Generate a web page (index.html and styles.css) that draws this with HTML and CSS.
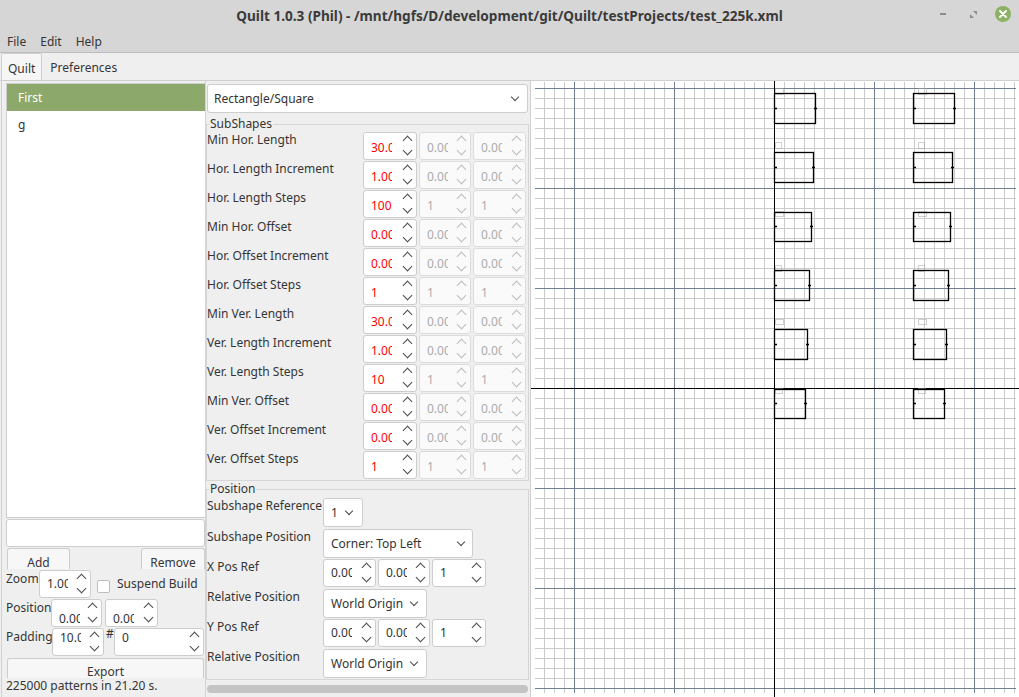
FILE: index.html
```html
<!DOCTYPE html>
<html>
<head>
<meta charset="utf-8">
<title>Quilt</title>
<link rel="stylesheet" href="styles.css">
</head>
<body>
<div class="window">
  <div class="titlebar">
    <div class="title">Quilt 1.0.3 (Phil) - /mnt/hgfs/D/development/git/Quilt/testProjects/test_225k.xml</div>
    <div class="wctl">
      <span class="wmin"></span>
      <svg class="wrestore" width="7" height="7" viewBox="0 0 7 7"><path d="M3 0H7V4Z M0 3V7H4Z" fill="#8c8c8c"/></svg>
      <span class="wclose"><svg width="8" height="8" viewBox="0 0 8 8"><path d="M1 1L7 7M7 1L1 7" stroke="#fff" stroke-width="1.8" stroke-linecap="round"/></svg></span>
    </div>
  </div>
  <div class="menubar"><span>File</span><span>Edit</span><span>Help</span></div>
  <div class="tabbar"><div class="tab active">Quilt</div><div class="tab">Preferences</div></div>
  <div class="pane">
    <div class="left">
      <div class="list">
        <div class="item sel">First</div>
        <div class="item">g</div>
      </div>
      <div class="lineedit"></div>
      <div class="btnrow"><div class="btn add">Add</div><div class="btn remove">Remove</div></div>
      <div class="frow">
        <span class="flabel lz">Zoom</span>
        <div class="spin w52"><span class="v">1.00</span><span class="arr"></span></div>
        <span class="check"></span><span class="cklabel">Suspend Build</span>
      </div>
      <div class="frow">
        <span class="flabel lp">Position</span>
        <div class="spin w51 tlow"><span class="v">0.00</span><span class="arr"></span></div>
        <div class="spin w53 tlow gap3"><span class="v">0.00</span><span class="arr"></span></div>
      </div>
      <div class="frow">
        <span class="flabel lpad">Padding</span>
        <div class="spin w52 thigh"><span class="v">10.00</span><span class="arr"></span></div>
        <span class="hash">#</span>
        <div class="spin w90 thigh"><span class="v wide">0</span><span class="arr"></span></div>
      </div>
      <div class="btn export">Export</div>
      <div class="status">225000 patterns in 21.20 s.</div>
    </div>

    <div class="mid">
      <div class="combo maincombo"><span>Rectangle/Square</span></div>
      <fieldset class="group sub">
        <legend>SubShapes</legend>
        <div class="srow"><span class="lbl">Min Hor. Length</span><div class="spin red"><span class="v">30.00</span><span class="arr"></span></div><div class="spin dis"><span class="v">0.00</span><span class="arr"></span></div><div class="spin dis"><span class="v">0.00</span><span class="arr"></span></div></div>
        <div class="srow"><span class="lbl">Hor. Length Increment</span><div class="spin red"><span class="v">1.00</span><span class="arr"></span></div><div class="spin dis"><span class="v">0.00</span><span class="arr"></span></div><div class="spin dis"><span class="v">0.00</span><span class="arr"></span></div></div>
        <div class="srow"><span class="lbl">Hor. Length Steps</span><div class="spin red"><span class="v">100</span><span class="arr"></span></div><div class="spin dis"><span class="v">1</span><span class="arr"></span></div><div class="spin dis"><span class="v">1</span><span class="arr"></span></div></div>
        <div class="srow"><span class="lbl">Min Hor. Offset</span><div class="spin red"><span class="v">0.00</span><span class="arr"></span></div><div class="spin dis"><span class="v">0.00</span><span class="arr"></span></div><div class="spin dis"><span class="v">0.00</span><span class="arr"></span></div></div>
        <div class="srow"><span class="lbl">Hor. Offset Increment</span><div class="spin red"><span class="v">0.00</span><span class="arr"></span></div><div class="spin dis"><span class="v">0.00</span><span class="arr"></span></div><div class="spin dis"><span class="v">0.00</span><span class="arr"></span></div></div>
        <div class="srow"><span class="lbl">Hor. Offset Steps</span><div class="spin red"><span class="v">1</span><span class="arr"></span></div><div class="spin dis"><span class="v">1</span><span class="arr"></span></div><div class="spin dis"><span class="v">1</span><span class="arr"></span></div></div>
        <div class="srow"><span class="lbl">Min Ver. Length</span><div class="spin red"><span class="v">30.00</span><span class="arr"></span></div><div class="spin dis"><span class="v">0.00</span><span class="arr"></span></div><div class="spin dis"><span class="v">0.00</span><span class="arr"></span></div></div>
        <div class="srow"><span class="lbl">Ver. Length Increment</span><div class="spin red"><span class="v">1.00</span><span class="arr"></span></div><div class="spin dis"><span class="v">0.00</span><span class="arr"></span></div><div class="spin dis"><span class="v">0.00</span><span class="arr"></span></div></div>
        <div class="srow"><span class="lbl">Ver. Length Steps</span><div class="spin red"><span class="v">10</span><span class="arr"></span></div><div class="spin dis"><span class="v">1</span><span class="arr"></span></div><div class="spin dis"><span class="v">1</span><span class="arr"></span></div></div>
        <div class="srow"><span class="lbl">Min Ver. Offset</span><div class="spin red"><span class="v">0.00</span><span class="arr"></span></div><div class="spin dis"><span class="v">0.00</span><span class="arr"></span></div><div class="spin dis"><span class="v">0.00</span><span class="arr"></span></div></div>
        <div class="srow"><span class="lbl">Ver. Offset Increment</span><div class="spin red"><span class="v">0.00</span><span class="arr"></span></div><div class="spin dis"><span class="v">0.00</span><span class="arr"></span></div><div class="spin dis"><span class="v">0.00</span><span class="arr"></span></div></div>
        <div class="srow"><span class="lbl">Ver. Offset Steps</span><div class="spin red"><span class="v">1</span><span class="arr"></span></div><div class="spin dis"><span class="v">1</span><span class="arr"></span></div><div class="spin dis"><span class="v">1</span><span class="arr"></span></div></div>
      </fieldset>
      <fieldset class="group pos">
        <legend>Position</legend>
        <div class="prow r1"><span class="lbl">Subshape Reference</span><div class="combo c40"><span>1</span></div></div>
        <div class="prow r2"><span class="lbl">Subshape Position</span><div class="combo c150"><span>Corner: Top Left</span></div></div>
        <div class="prow r3"><span class="lbl">X Pos Ref</span><div class="spins3"><div class="spin w53"><span class="v">0.00</span><span class="arr"></span></div><div class="spin w52"><span class="v">0.00</span><span class="arr"></span></div><div class="spin w54"><span class="v">1</span><span class="arr"></span></div></div></div>
        <div class="prow r2"><span class="lbl">Relative Position</span><div class="combo c104"><span>World Origin</span></div></div>
        <div class="prow r3"><span class="lbl">Y Pos Ref</span><div class="spins3"><div class="spin w53"><span class="v">0.00</span><span class="arr"></span></div><div class="spin w52"><span class="v">0.00</span><span class="arr"></span></div><div class="spin w54"><span class="v">1</span><span class="arr"></span></div></div></div>
        <div class="prow r2"><span class="lbl">Relative Position</span><div class="combo c104"><span>World Origin</span></div></div>
      </fieldset>
      <div class="hscroll"></div>
    </div>

    <div class="canvas">
      <svg width="488" height="616" viewBox="531 81 488 616">
        <defs>
          <pattern id="mn" x="4" y="8" width="10" height="10" patternUnits="userSpaceOnUse"><path d="M0.5 0V10M0 0.5H10" stroke="#cbcbcb" fill="none"/></pattern>
          <pattern id="mj" x="74" y="88" width="100" height="100" patternUnits="userSpaceOnUse"><path d="M0.5 0V100M0 0.5H100" stroke="#708090" fill="none"/></pattern>
        </defs>
        <rect x="535" y="82" width="481" height="611" fill="url(#mn)"/>
        <rect x="535" y="82" width="481" height="611" fill="url(#mj)"/>
        <path d="M774.5 81V697M531 388.5H1019" stroke="#000" fill="none"/>
        <g fill="none" stroke="#a0a0a0" stroke-dasharray="1 1">
          <rect x="775.5" y="88.5" width="8" height="6"/>
          <rect x="775.5" y="142.5" width="6" height="6"/>
          <rect x="775.5" y="211.5" width="8" height="5"/>
          <rect x="775.5" y="265.5" width="6" height="6"/>
          <rect x="775.5" y="319.5" width="8" height="5"/>
          <rect x="775.5" y="388.5" width="7" height="5"/>
          <rect x="918.5" y="88.5" width="8" height="6"/>
          <rect x="918.5" y="142.5" width="6" height="6"/>
          <rect x="918.5" y="211.5" width="8" height="5"/>
          <rect x="918.5" y="265.5" width="6" height="6"/>
          <rect x="918.5" y="319.5" width="8" height="5"/>
          <rect x="918.5" y="388.5" width="7" height="5"/>
        </g>
        <g fill="none" stroke="#000" stroke-width="1.3">
          <rect x="774.5" y="93.5" width="41" height="30"/>
          <rect x="774.5" y="152.5" width="39" height="30"/>
          <rect x="774.5" y="212.5" width="37" height="29"/>
          <rect x="774.5" y="270.5" width="35" height="30"/>
          <rect x="774.5" y="329.5" width="33" height="30"/>
          <rect x="774.5" y="389.5" width="31" height="29"/>
          <rect x="913.5" y="93.5" width="41" height="30"/>
          <rect x="913.5" y="152.5" width="39" height="30"/>
          <rect x="913.5" y="212.5" width="37" height="29"/>
          <rect x="913.5" y="270.5" width="35" height="30"/>
          <rect x="913.5" y="329.5" width="33" height="30"/>
          <rect x="913.5" y="389.5" width="31" height="29"/>
          <path d="M774 108.5h3M814 108.5h3M774 167.5h3M812 167.5h3M774 226.5h3M810 226.5h3M774 285.5h3M808 285.5h3M774 344.5h3M806 344.5h3M774 403.5h3M804 403.5h3M913 108.5h3M953 108.5h3M913 167.5h3M951 167.5h3M913 226.5h3M949 226.5h3M913 285.5h3M947 285.5h3M913 344.5h3M945 344.5h3M913 403.5h3M943 403.5h3"/>
        </g>
      </svg>
    </div>
  </div>
</div>
</body>
</html>
```

FILE: styles.css
```css
* { box-sizing: border-box; }
body {
  margin: 0;
  font-family: "Noto Sans", "Open Sans", sans-serif;
  font-size: 12px;
  color: #353535;
}
.window {
  width: 1019px;
  height: 697px;
  overflow: hidden;
  background: #efefef;
  display: flex;
  flex-direction: column;
}

/* title bar */
.titlebar {
  height: 30px;
  flex: none;
  background: #d6d6d6;
  display: grid;
  grid-template-columns: 1fr auto 1fr;
  align-items: center;
}
.title {
  grid-column: 2;
  font-weight: bold;
  font-size: 13.6px;
  color: #3b3b3b;
  white-space: nowrap;
}
.wctl {
  grid-column: 3;
  justify-self: end;
  display: flex;
  align-items: center;
  padding-right: 8px;
  margin-top: -2px;
}
.wmin { width: 6px; height: 2px; background: #8c8c8c; margin-right: 24px; }
.wrestore { display: block; margin-right: 18px; }
.wclose {
  width: 16px; height: 16px; border-radius: 50%;
  background: #8db266;
  display: flex; align-items: center; justify-content: center;
}
.wclose svg { display: block; }

/* menu */
.menubar {
  height: 23px;
  flex: none;
  background: #d6d6d6;
  border-bottom: 1px solid #bdbdbd;
  display: flex;
  align-items: center;
}
.menubar span { padding: 0 7px; }

/* tabs */
.tabbar { height: 27px; flex: none; display: flex; }
.tab { height: 27px; padding: 2px 8px 0; display: flex; align-items: center; }
.tab.active {
  margin-left: 1px;
  padding: 2px 6px 0;
  background: #f6f6f6;
  border: 1px solid #cfcfcf;
  border-bottom: none;
  border-radius: 2px 2px 0 0;
}

/* pane */
.pane {
  flex: 1;
  display: flex;
  border-top: 1px solid #cfcfcf;
  min-height: 0;
}

/* left column */
.left {
  width: 204px;
  flex: none;
  margin-left: 1px;
  border-left: 1px solid #d0d0d0;
  padding-left: 4px;
  display: flex;
  flex-direction: column;
}
.list {
  margin-top: 2px;
  height: 435px;
  background: #fff;
  border: 1px solid #cdcdcd;
  border-right: none;
}
.item { height: 27px; line-height: 27px; padding-left: 11px; color: #333; }
.item + .item { height: 28px; line-height: 28px; }
.item.sel { background: #8ca86b; color: #fff; }
.lineedit {
  margin-top: 1px;
  height: 28px;
  background: #fff;
  border: 1px solid #cdcdcd;
  border-radius: 3px;
}
.btnrow {
  margin-top: 1px;
  height: 21px;
  padding-left: 1px;
  display: flex;
  justify-content: space-between;
}
.btn {
  height: 21px;
  border: 1px solid #cdcdcd;
  border-bottom: none;
  border-radius: 3px 3px 0 0;
  background: #f7f7f7;
  text-align: center;
  line-height: 13px;
  padding-top: 7px;
}
.btn.add { width: 63px; }
.btn.remove { width: 64px; }
.frow { height: 28px; margin-top: 1px; display: flex; align-items: flex-start; }
.frow:first-of-type { margin-top: 0; }
.flabel { line-height: 16px; padding-top: 1px; white-space: nowrap; }
.lz { width: 33px; }
.lp { width: 45px; }
.lpad { width: 46px; }
.check {
  width: 13px; height: 13px;
  margin: 10px 0 0 6px;
  background: #fff;
  border: 1px solid #bdbdbd;
  border-radius: 2px;
}
.cklabel { margin: 6px 0 0 7px; line-height: 16px; white-space: nowrap; }
.gap3 { margin-left: 3px; }
.hash { width: 10px; padding-left: 2px; line-height: 12px; }
.export {
  margin: 2px 0 0 1px;
  width: 197px;
  height: 20px;
  padding-top: 6px;
}
.status { line-height: 16px; white-space: nowrap; }

/* spin box */
.spin {
  height: 28px;
  width: 54px;
  flex: none;
  background: #fff;
  border: 1px solid #cdcdcd;
  border-radius: 3px;
  display: flex;
  align-items: center;
  padding-left: 7px;
  color: #333;
}
.spin .v {
  width: 21px;
  overflow: hidden;
  white-space: nowrap;
  line-height: 16px;
}
.spin .v.wide { width: auto; }
.arr {
  margin-left: auto;
  width: 18px;
  align-self: stretch;
  display: flex;
  flex-direction: column;
  align-items: center;
  padding-top: 4px;
  color: #4a4a4a;
}
.arr::before, .arr::after {
  content: "";
  width: 6px;
  height: 6px;
  border-left: 1px solid currentColor;
  border-top: 1px solid currentColor;
  transform: rotate(45deg);
}
.arr::after { transform: rotate(225deg); margin-top: 3px; }
.w51 { width: 51px; }
.w52 { width: 52px; }
.w53 { width: 53px; }
.w54 { width: 54px; }
.w90 { width: 90px; }
.tlow .v { margin-top: 11px; }
.thigh .v { margin-bottom: 9px; }
.spin.red { color: #ff0000; }
.spin.dis { background: #fafafa; border-color: #dcdcdc; color: #ababab; }
.spin.dis .arr { color: #bcbcbc; }
.srow .spin .v { margin-top: 4px; }

/* middle column */
.mid {
  width: 325px;
  flex: none;
  border-left: 1px solid #d4d4d4;
  padding-top: 3px;
  display: flex;
  flex-direction: column;
}
.combo {
  height: 29px;
  background: #fff;
  border: 1px solid #cdcdcd;
  border-radius: 3px;
  display: flex;
  align-items: center;
  padding-left: 6px;
  color: #333;
  flex: none;
  white-space: nowrap;
}
.combo::after {
  content: "";
  margin-left: auto;
  margin-right: 9px;
  margin-top: -3px;
  width: 5px;
  height: 5px;
  border-right: 1.2px solid #4a4a4a;
  border-bottom: 1.2px solid #4a4a4a;
  transform: rotate(45deg);
}
.maincombo { margin-left: 1px; width: 321px; }
.group {
  width: 323px;
  margin: 3px 0 0 0;
  padding: 0 0 1px 0;
  border: 1px solid #d6d6d6;
  min-width: 0;
}
.group legend {
  padding: 0 1px;
  margin-left: 2px;
  line-height: 16px;
}
.group.pos { margin-top: 0; }
.srow {
  display: grid;
  grid-template-columns: 154px 54px 52px 53px;
  column-gap: 2px;
  height: 28px;
  margin-bottom: 1px;
}
.srow:last-child { margin-bottom: 0; }
.srow .spin { width: auto; }
.lbl { line-height: 16px; white-space: nowrap; }
.prow {
  display: grid;
  grid-template-columns: 116px auto;
  justify-content: start;
  align-items: start;
}
.prow.r1 { margin-top: 1px; }
.prow.r2 { margin-top: 2px; }
.prow.r3 { margin-top: 1px; }
.combo.c40 { width: 40px; padding-left: 7px; }
.combo.c150 { width: 150px; padding-left: 7px; }
.combo.c104 { width: 104px; padding-left: 7px; }
.combo.c40::after { margin-right: 10px; }
.combo.c150::after { margin-right: 8px; }
.spins3 { display: flex; gap: 2px; }
.hscroll {
  margin: 5px 0 0 1px;
  width: 321px;
  height: 8px;
  border-radius: 4px;
  background: #c4c4c4;
}

/* canvas */
.canvas {
  flex: 1;
  border-left: 1px solid #d0d0d0;
  background: #fff;
  overflow: hidden;
}
.canvas svg { display: block; }
```
